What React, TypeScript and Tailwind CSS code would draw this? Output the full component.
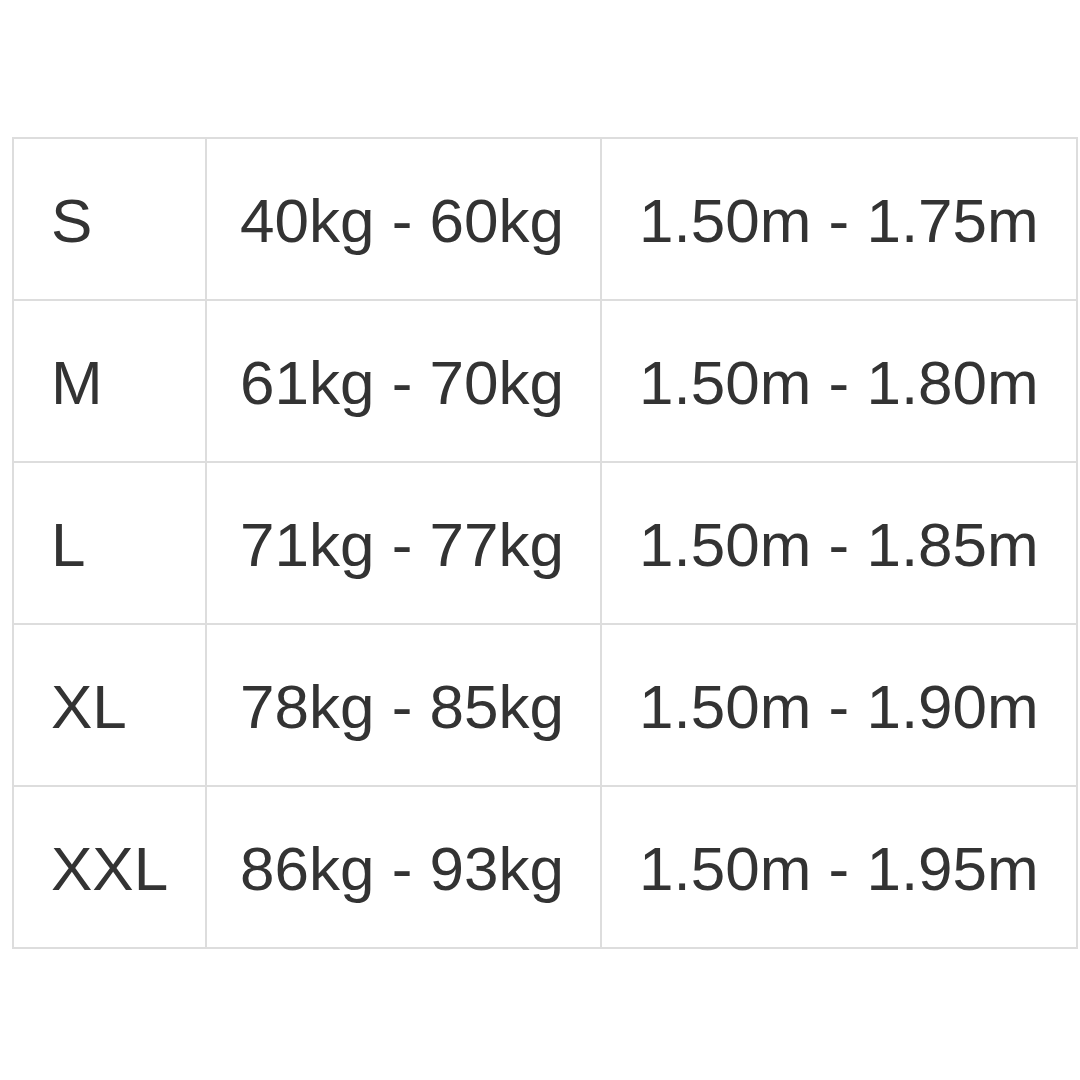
import React from "react";

const rows = [
  ["S", "40kg - 60kg", "1.50m - 1.75m"],
  ["M", "61kg - 70kg", "1.50m - 1.80m"],
  ["L", "71kg - 77kg", "1.50m - 1.85m"],
  ["XL", "78kg - 85kg", "1.50m - 1.90m"],
  ["XXL", "86kg - 93kg", "1.50m - 1.95m"],
];

const pads = ["pl-[37px] pr-[20px]", "pl-[33px] pr-[20px]", "pl-[37px] pr-[20px]"];

export default function App() {
  return (
    <div className="w-[1080px] h-[1080px] bg-white pt-[137px] pl-[12px]" style={{ fontFamily: '"Liberation Sans", Arial, sans-serif' }}>
      <table className="w-[1064px] table-fixed border-collapse border-2 border-[#dddddd] text-[62px] text-[#333333]">
        <colgroup>
          <col className="w-[193px]" />
          <col className="w-[395px]" />
          <col className="w-[476px]" />
        </colgroup>
        <tbody>
          {rows.map((r) => (
            <tr key={r[0]} className="h-[162px]">
              {r.map((c, i) => (
                <td key={i} className={`border-2 border-[#dddddd] pt-[3px] align-middle whitespace-nowrap leading-none ${pads[i]}`}>
                  {c}
                </td>
              ))}
            </tr>
          ))}
        </tbody>
      </table>
    </div>
  );
}
